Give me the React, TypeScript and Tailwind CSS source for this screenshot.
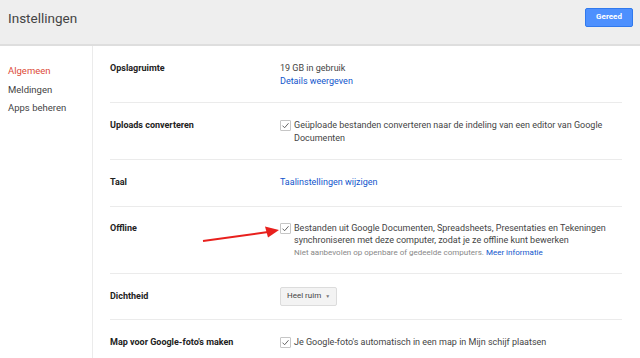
const font = { fontFamily: "Roboto, 'Liberation Sans', sans-serif" }

function Check() {
  return (
    <span className="mt-[1px] flex h-[11px] w-[11px] shrink-0 items-center justify-center rounded-[1px] border border-[#c6c6c6] bg-white">
      <svg viewBox="0 0 12 12" className="h-[9px] w-[9px]">
        <path d="M2 6.2 L4.8 9 L10 3" fill="none" stroke="#555" strokeWidth="1.2" />
      </svg>
    </span>
  )
}

function Row({ label, children, pad, last }: { label: string; children: React.ReactNode; pad: string; last?: boolean }) {
  return (
    <div className={`flex ${pad} ${last ? "" : "border-b border-[#ebebeb]"}`}>
      <div className="w-[170px] shrink-0 font-bold text-[#222]">{label}</div>
      <div className="flex-1 text-[#444]">{children}</div>
    </div>
  )
}

export default function App() {
  return (
    <div className="h-[358px] w-[640px] overflow-hidden bg-white text-[9px] leading-[12.5px]" style={font}>
      <div className="flex h-[46px] items-start justify-between border-b-2 border-[#dedede] bg-[#eeeeee] pl-[8px] pr-[7px] pt-[8px]">
        <h1 className="text-[13.5px] font-normal leading-[20px] text-[#444]">Instellingen</h1>
        <button className="h-[19px] w-[48px] rounded-[2px] border border-[#3079ed] bg-[#4d90fe] text-[8px] font-bold text-white">
          Gereed
        </button>
      </div>

      <div className="flex h-full">
        <div className="w-[93px] shrink-0 border-r border-[#ebebeb] pl-[8px] pt-[16px] text-[9.5px] leading-[18.5px]">
          <div className="text-[#dd4b39]">Algemeen</div>
          <div className="text-[#444]">Meldingen</div>
          <div className="text-[#444]">Apps beheren</div>
        </div>

        <div className="w-[529px] pl-[17px] pt-[16px]">
          <Row label="Opslagruimte" pad="pb-[15px]">
            <div>19 GB in gebruik</div>
            <div className="text-[#1155cc]">Details weergeven</div>
          </Row>

          <Row label="Uploads converteren" pad="pb-[15px] pt-[16px]">
            <div className="flex gap-[3px]">
              <Check />
              <div>Geüploade bestanden converteren naar de indeling van een editor van Google Documenten</div>
            </div>
          </Row>

          <Row label="Taal" pad="pb-[17px] pt-[16px]">
            <div className="text-[#1155cc]">Taalinstellingen wijzigen</div>
          </Row>

          <Row label="Offline" pad="pb-[14px] pt-[15px]">
            <div className="relative flex gap-[3px]">
              <svg className="absolute left-[-78px] top-[2px]" width="78" height="20" viewBox="0 0 78 20">
                <path d="M1 17 L66 8" stroke="#e8201d" strokeWidth="2" />
                <path d="M77 6 L63 2.5 L66 13.5 Z" fill="#e8201d" />
              </svg>
              <Check />
              <div>
                <div>Bestanden uit Google Documenten, Spreadsheets, Presentaties en Tekeningen synchroniseren met deze computer, zodat je ze offline kunt bewerken</div>
                <div className="text-[8px] leading-[12px] text-[#888]">
                  Niet aanbevolen op openbare of gedeelde computers. <span className="text-[#1155cc]">Meer informatie</span>
                </div>
              </div>
            </div>
          </Row>

          <Row label="Dichtheid" pad="items-center py-[13px]">
            <span className="inline-flex h-[19px] items-center gap-[4px] rounded-[2px] border border-[#dcdcdc] bg-[#f3f3f3] px-[6px] text-[8px] text-[#444]">
              Heel ruim
              <span className="text-[5px] text-[#777]">▼</span>
            </span>
          </Row>

          <Row label="Map voor Google-foto's maken" pad="pt-[16px]" last>
            <div className="flex gap-[3px]">
              <Check />
              <div>Je Google-foto's automatisch in een map in Mijn schijf plaatsen</div>
            </div>
          </Row>
        </div>
      </div>
    </div>
  )
}
